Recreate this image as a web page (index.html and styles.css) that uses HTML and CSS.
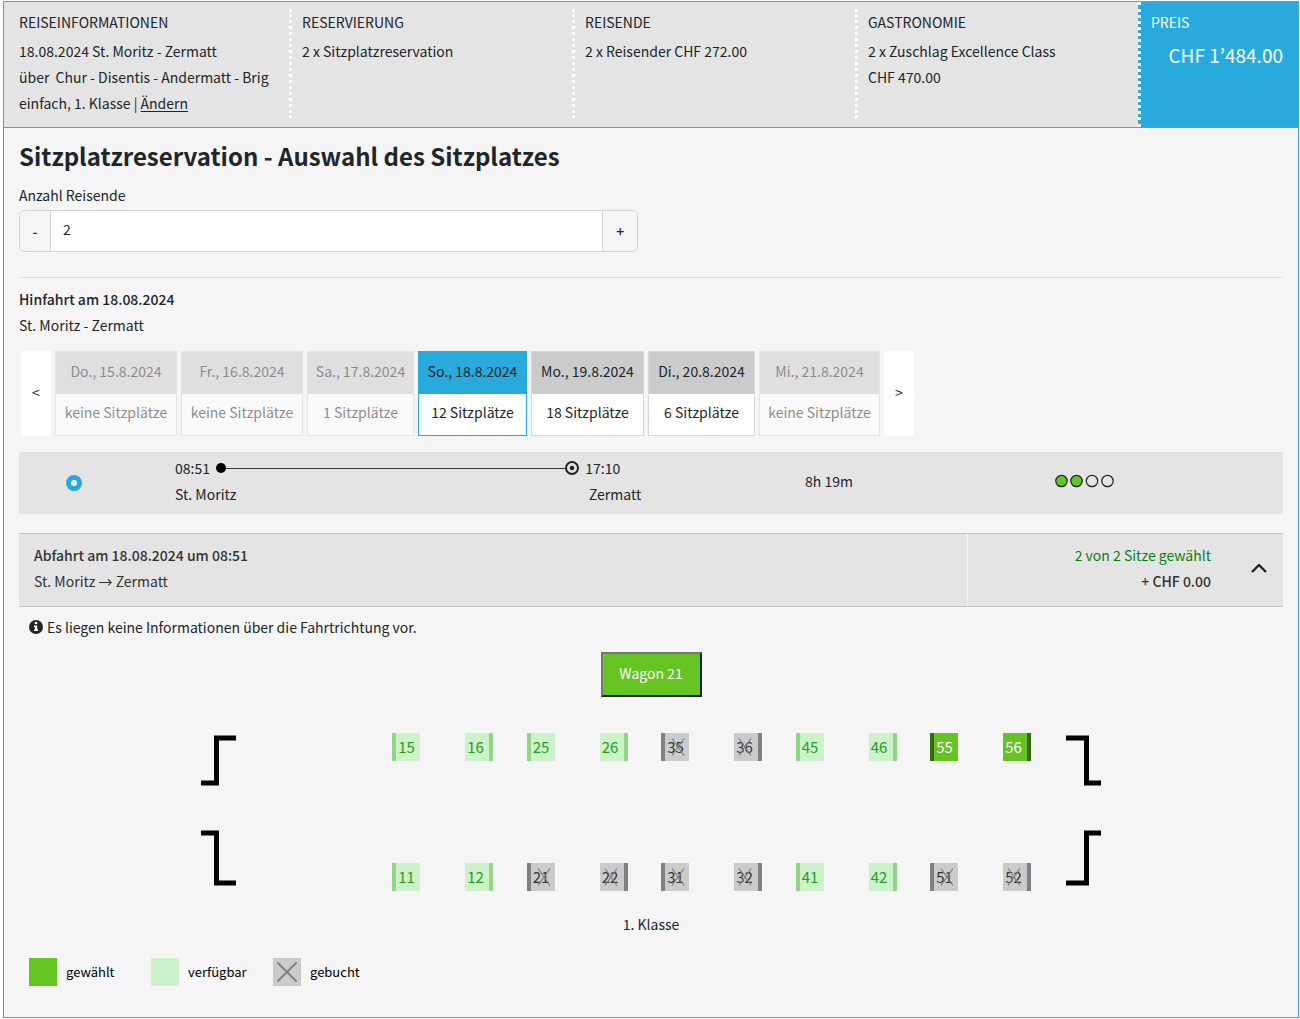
FILE: index.html
```html
<!DOCTYPE html>
<html lang="de">
<head>
<meta charset="utf-8">
<meta name="viewport" content="width=device-width, initial-scale=1">
<title>Sitzplatzreservation</title>
<link rel="stylesheet" href="styles.css">
</head>
<body>
<svg class="symbols" aria-hidden="true">
  <symbol id="cross" viewBox="0 0 14 18"><path d="M1 0.500L13 17.500M13 0.500L1 17.500" fill="none" stroke="#808080" stroke-width="1.300"/></symbol>
  <symbol id="door-up" viewBox="0 0 35 51"><path d="M35 3H15.500V48H0" fill="none" stroke="#000" stroke-width="5"/></symbol>
  <symbol id="door-down" viewBox="0 0 35 56"><path d="M0 3H15.500V53H35" fill="none" stroke="#000" stroke-width="5"/></symbol>
</svg>
<div class="frame">
  <header class="summary">
    <section class="summary-cell">
      <h2>REISEINFORMATIONEN</h2>
      <p>18.08.2024 St. Moritz - Zermatt<br>über&nbsp; Chur - Disentis - Andermatt - Brig<br>einfach, 1. Klasse | <a href="#">Ändern</a></p>
    </section>
    <section class="summary-cell">
      <h2>RESERVIERUNG</h2>
      <p>2 x Sitzplatzreservation</p>
    </section>
    <section class="summary-cell">
      <h2>REISENDE</h2>
      <p>2 x Reisender CHF 272.00</p>
    </section>
    <section class="summary-cell">
      <h2>GASTRONOMIE</h2>
      <p>2 x Zuschlag Excellence Class<br>CHF 470.00</p>
    </section>
    <section class="summary-cell price">
      <h2>PREIS</h2>
      <p class="amount">CHF 1’484.00</p>
    </section>
  </header>

  <main class="content">
    <h1>Sitzplatzreservation - Auswahl des Sitzplatzes</h1>
    <label for="count">Anzahl Reisende</label>
    <div class="stepper">
      <button type="button" aria-label="weniger">-</button>
      <input id="count" type="text" value="2">
      <button type="button" aria-label="mehr">+</button>
    </div>
    <hr>

    <p class="strong">Hinfahrt am 18.08.2024</p>
    <p>St. Moritz - Zermatt</p>

    <div class="dates">
      <button type="button" class="arrow">&lt;</button>
      <button type="button" class="date" disabled><span>Do., 15.8.2024</span><span>keine Sitzplätze</span></button>
      <button type="button" class="date" disabled><span>Fr., 16.8.2024</span><span>keine Sitzplätze</span></button>
      <button type="button" class="date" disabled><span>Sa., 17.8.2024</span><span>1 Sitzplätze</span></button>
      <button type="button" class="date active"><span>So., 18.8.2024</span><span>12 Sitzplätze</span></button>
      <button type="button" class="date"><span>Mo., 19.8.2024</span><span>18 Sitzplätze</span></button>
      <button type="button" class="date"><span>Di., 20.8.2024</span><span>6 Sitzplätze</span></button>
      <button type="button" class="date" disabled><span>Mi., 21.8.2024</span><span>keine Sitzplätze</span></button>
      <button type="button" class="arrow">&gt;</button>
    </div>

    <div class="connection">
      <div class="pick"><input type="radio" name="connection" checked aria-label="08:51 St. Moritz – 17:10 Zermatt"></div>
      <div class="trip">
        <div class="times">
          <span>08:51</span>
          <span class="track">
            <svg width="10" height="10" viewBox="0 0 10 10"><circle cx="5" cy="5" r="5"/></svg>
            <span class="line"></span>
            <svg width="14" height="14" viewBox="0 0 14 14"><circle cx="7" cy="7" r="6" fill="none" stroke="#212529" stroke-width="2"/><circle cx="7" cy="7" r="2.300" fill="#212529"/></svg>
          </span>
          <span>17:10</span>
        </div>
        <div class="stops"><span>St. Moritz</span><span>Zermatt</span></div>
      </div>
      <div>8h 19m</div>
      <svg class="load" width="60" height="14" viewBox="0 0 60 14" role="img" aria-label="Auslastung 2 von 4">
        <g stroke="#222" stroke-width="1.200"><circle cx="6.500" cy="7" r="5.700" fill="#65c322"/><circle cx="21.500" cy="7" r="5.700" fill="#65c322"/><circle cx="37" cy="7" r="5.700" fill="none"/><circle cx="52.500" cy="7" r="5.700" fill="none"/></g>
      </svg>
    </div>

    <div class="leg">
      <div class="leg-route">
        <p class="strong">Abfahrt am 18.08.2024 um 08:51</p>
        <p>St. Moritz → Zermatt</p>
      </div>
      <div class="leg-state">
        <div class="leg-sum">
          <p class="chosen">2 von 2 Sitze gewählt</p>
          <p class="strong">+ CHF 0.00</p>
        </div>
        <button type="button" class="toggle" aria-label="Zuklappen"><svg width="18" height="12" viewBox="0 0 18 12"><path d="M2 10L9 3L16 10" fill="none" stroke="#222" stroke-width="2.400" stroke-linejoin="round"/></svg></button>
      </div>
    </div>

    <div class="car">
      <p class="note"><svg width="14" height="14" viewBox="0 0 14 14"><circle cx="7" cy="7" r="7" fill="#212529"/><path d="M5.800 2.100h2.400v2H5.800zM5 5.500h3.200v4h0.900v1.500H5v-1.500h0.900V7H5z" fill="#fff"/></svg>Es liegen keine Informationen über die Fahrtrichtung vor.</p>
      <button type="button" class="wagon">Wagon 21</button>

      <div class="plan">
        <div class="doors">
          <svg width="35" height="51"><use href="#door-up"/></svg>
          <svg width="35" height="56"><use href="#door-down"/></svg>
        </div>
        <div class="seats">
          <div class="seat-row">
            <div class="pair"><button type="button" class="seat">15</button><button type="button" class="seat back">16</button></div>
            <div class="pair"><button type="button" class="seat">25</button><button type="button" class="seat back">26</button></div>
            <div class="pair"><button type="button" class="seat booked" disabled>35<svg><use href="#cross"/></svg></button><button type="button" class="seat back booked" disabled>36<svg><use href="#cross"/></svg></button></div>
            <div class="pair"><button type="button" class="seat">45</button><button type="button" class="seat back">46</button></div>
            <div class="pair"><button type="button" class="seat selected">55</button><button type="button" class="seat back selected">56</button></div>
          </div>
          <div class="seat-row">
            <div class="pair"><button type="button" class="seat">11</button><button type="button" class="seat back">12</button></div>
            <div class="pair"><button type="button" class="seat booked" disabled>21<svg><use href="#cross"/></svg></button><button type="button" class="seat back booked" disabled>22<svg><use href="#cross"/></svg></button></div>
            <div class="pair"><button type="button" class="seat booked" disabled>31<svg><use href="#cross"/></svg></button><button type="button" class="seat back booked" disabled>32<svg><use href="#cross"/></svg></button></div>
            <div class="pair"><button type="button" class="seat">41</button><button type="button" class="seat back">42</button></div>
            <div class="pair"><button type="button" class="seat booked" disabled>51<svg><use href="#cross"/></svg></button><button type="button" class="seat back booked" disabled>52<svg><use href="#cross"/></svg></button></div>
          </div>
        </div>
        <div class="doors">
          <svg width="35" height="51"><path d="M0 3H20.500V48H35" fill="none" stroke="#000" stroke-width="5"/></svg>
          <svg width="35" height="56"><path d="M35 3H20.500V53H0" fill="none" stroke="#000" stroke-width="5"/></svg>
        </div>
      </div>
      <p class="class-name">1. Klasse</p>

      <ul class="legend">
        <li><span class="swatch swatch-selected"></span>gewählt</li>
        <li><span class="swatch"></span>verfügbar</li>
        <li><span class="swatch swatch-booked"><svg width="20" height="20" viewBox="0 0 20 20"><path d="M1 1L19 19M19 1L1 19" stroke="#808080" stroke-width="1.800" stroke-linecap="round"/></svg></span>gebucht</li>
      </ul>
    </div>
  </main>
</div>
</body>
</html>
```
FILE: styles.css
```css
* { box-sizing: border-box; }
body {
  margin: 1px 1px 1px 3px;
  background: #fff;
  color: #212529;
  font: 14px/26px "Noto Sans CJK KR", "Noto Sans", sans-serif;
}
h1, h2, p, ul { margin: 0; padding: 0; }
button, input { font: inherit; color: inherit; margin: 0; padding: 0; border: 0; border-radius: 0; }
a { color: inherit; text-underline-offset: 2px; }
svg { display: block; }
.symbols { display: none; }
.strong { font-weight: 500; }

.frame { border: 1px solid #3aabd6; background: #f5f5f5; }

/* trip summary */
.summary {
  display: grid;
  grid-template-columns: 285fr 283fr 283fr 283fr 160fr;
  min-height: 126px;
  background: #e4e4e4;
  border-bottom: 1px solid #3aabd6;
}
.summary-cell { margin: 7px 0 9px; padding: 0 10px; border-left: 3px dotted #fff; white-space: nowrap; }
.summary-cell:first-child { border-left: 0; padding-left: 15px; }
.summary h2 { font-size: 14px; font-weight: 400; margin-bottom: 3px; }
.summary .price { margin: 0; padding: 7px 15px 8px 10px; background: #28aadc; color: #fff; }
.amount { font-size: 19px; line-height: 34px; text-align: right; }

.content { padding: 12px 15px 31px; }
h1 { font-size: 24px; line-height: 32px; font-weight: 600; }
.content > label { display: block; margin: 10px 0 2px; }
.stepper {
  display: flex;
  width: 49%;
  height: 42px;
  border: 1px solid #ced4da;
  border-radius: 6px;
  overflow: hidden;
}
.stepper button { width: 30px; background: #f5f5f5; font-weight: 500; }
.stepper button:last-child { width: 34px; }
.stepper input {
  flex: 1;
  min-width: 0;
  padding: 0 12px 4px;
  background: #fff;
  border: 1px solid #ced4da;
  border-width: 0 1px;
}
hr { height: 1px; margin: 25px 0 8px; border: 0; background: #dedfe0; }

/* date picker */
.dates {
  display: grid;
  grid-template-columns: 30px 122px 122px 107px 109px 113px 107px 121px 30px;
  gap: 4px;
  margin: 13px 0 16px 2px;
  height: 85px;
}
.arrow { background: #fff; padding-bottom: 4px; }
.date {
  display: flex;
  flex-direction: column;
  background: #fff;
  border: 1px solid #d4d7db;
  white-space: nowrap;
}
.date span { flex: 1; width: 100%; padding-bottom: 4px; display: flex; align-items: center; justify-content: center; }
.date span:first-child { background: #cbcbcb; }
.date:disabled { opacity: 0.5; }
.date.active { border-color: #28aadc; }
.date.active span:first-child { background: #28aadc; }

/* connection */
.connection {
  display: grid;
  grid-template-columns: 156fr 630fr 250fr 228fr;
  align-items: center;
  height: 62px;
  padding-bottom: 4px;
  background: #e4e4e4;
}
.pick { padding: 4px 0 0 47px; display: flex; }
.pick input {
  appearance: none;
  width: 16px;
  height: 16px;
  border: 5px solid #28a8da;
  border-radius: 50%;
  background: #fff;
}
.trip { width: 74%; }
.times { display: flex; gap: 6px; padding-right: 21px; }
.track { flex: 1; display: flex; align-items: center; }
.line { flex: 1; height: 1px; background: #333; }
.stops { display: flex; justify-content: space-between; }

/* leg header */
.leg {
  display: flex;
  margin-top: 19px;
  background: #e4e4e4;
  border: 1px solid #c4c4c4;
  border-width: 1px 0;
  color: #333;
}
.leg-route { width: 75%; padding: 8px 15px 12px; }
.leg-state { width: 25%; padding-bottom: 4px; display: flex; align-items: center; border-left: 1px dotted #fff; }
.leg-sum { flex: 1; text-align: right; }
.chosen { color: #0a820a; }
.toggle { width: 48px; height: 48px; margin-left: 24px; background: none; }
.toggle svg { margin-left: 15px; }

/* seat plan */
.car { padding: 7px 10px 0; }
.note { display: flex; align-items: center; gap: 4px; }
.wagon {
  display: block;
  margin: 12px auto 36px;
  width: 101px;
  height: 45px;
  padding-bottom: 4px;
  background: #65c322;
  color: #fff;
  border: 2px solid;
  border-color: #767676 #212121 #212121 #767676;
}
.plan { display: flex; justify-content: space-between; width: 900px; margin: 0 auto; height: 158px; }
.doors { display: flex; flex-direction: column; justify-content: space-between; padding: 2px 0 5px; }
.seats { flex: 1; margin: 0 35px 0 156px; display: flex; flex-direction: column; justify-content: space-between; }
.seat-row { display: flex; justify-content: space-between; }
.pair { display: flex; justify-content: space-between; width: 101px; }
.seat {
  position: relative;
  width: 28px;
  height: 28px;
  padding-right: 3px;
  font-size: 15px;
  line-height: 28px;
  background: #cdf1c8;
  color: #1ea01e;
  border-left: 4px solid #92d488;
}
.seat.back { border-left: 0; border-right: 4px solid #92d488; }
.seat.selected { background: #65c322; border-color: #37690f; color: #fff; }
.seat.booked { background: #cbcbcb; border-color: #808084; color: #333; }
.seat svg { position: absolute; left: 6px; top: 5px; width: 14px; height: 18px; }
.seat.back svg { left: 4px; }
.class-name { text-align: center; margin: 20px 0 21px; }

.legend { display: flex; list-style: none; font-size: 13px; line-height: 28px; color: #000; }
.legend li { display: flex; gap: 9px; width: 122px; }
.swatch { width: 28px; height: 28px; background: #cdf1c8; }
.swatch-selected { background: #65c322; }
.swatch-booked { background: #cbcbcb; padding: 4px; }
```
